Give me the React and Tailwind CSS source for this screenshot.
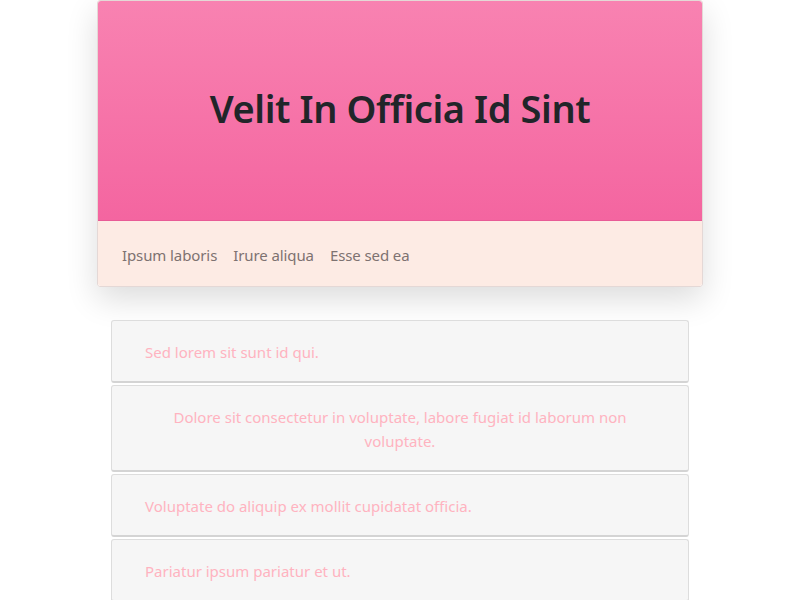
import React from 'react';

const navLinks = ['Ipsum laboris', 'Irure aliqua', 'Esse sed ea'];

const items = [
  { text: 'Sed lorem sit sunt id qui.', center: false },
  { text: 'Dolore sit consectetur in voluptate, labore fugiat id laborum non voluptate.', center: true },
  { text: 'Voluptate do aliquip ex mollit cupidatat officia.', center: false },
  { text: 'Pariatur ipsum pariatur et ut.', center: false },
];

export default function App() {
  return (
    <div className="min-h-screen bg-white font-['Noto_Sans','Open_Sans',sans-serif] overflow-hidden h-[600px]">
      {/* Card */}
      <div className="mx-auto w-[606px] rounded-[3px] border border-[#e4d8d6] shadow-[0_12px_32px_rgba(0,0,0,0.14)]">
        <div className="h-[220px] flex items-center justify-center rounded-t-[3px] bg-gradient-to-b from-[#f882b1] to-[#f465a0] border-b border-[#e85b96]">
          <h1 className="text-[38px] font-semibold text-[#212529] tracking-[-0.4px] -mt-[4px]">
            Velit In Officia Id Sint
          </h1>
        </div>
        <div className="h-[65px] bg-[#fdebe4] flex items-center gap-4 px-6 pt-[3px] rounded-b-[3px]">
          {navLinks.map((l) => (
            <span key={l} className="text-[15px] tracking-[-0.1px] text-[#7d7271]">{l}</span>
          ))}
        </div>
      </div>

      {/* List */}
      <div className="mx-auto w-[578px] mt-[33px] flex flex-col gap-[2px]">
        {items.map((it) => (
          <div
            key={it.text}
            className={`bg-[#f6f6f6] border border-[#dddddd] border-b-[2px] border-b-[#d4d4d4] rounded-[3px] pt-[19px] pb-[17px] px-[33px] text-[15px] leading-6 text-[#ffb3c0] ${
              it.center ? 'text-center px-[60px]' : ''
            }`}
          >
            {it.text}
          </div>
        ))}
      </div>
    </div>
  );
}
